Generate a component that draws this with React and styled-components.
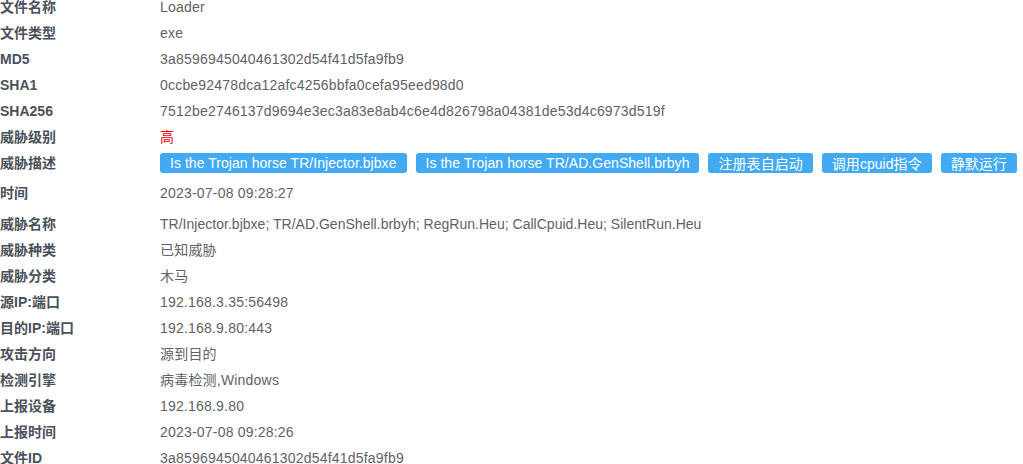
import React from 'react';
import styled, { createGlobalStyle } from 'styled-components';

const GlobalStyle = createGlobalStyle`
  html, body {
    margin: 0;
    padding: 0;
    background: #fff;
    overflow: hidden;
  }
  body {
    font-family: "Liberation Sans", Arial, "Noto Sans CJK SC", sans-serif;
  }
`;

const Wrapper = styled.div`
  margin-top: -6px;
  width: 1023px;
`;

const Section = styled.div`
  display: flex;
  flex-direction: column;
  margin-bottom: ${(p) => p.gap || 0}px;
`;

const Row = styled.div`
  display: flex;
  align-items: ${(p) => (p.tags ? 'flex-start' : 'center')};
  min-height: 26px;
  padding: ${(p) => (p.tags ? '3px 0 3px' : '0')};
  box-sizing: border-box;
`;

const Label = styled.div`
  width: 160px;
  flex-shrink: 0;
  font-size: 14px;
  font-weight: bold;
  color: #4a515b;
  line-height: 20px;
`;

const Value = styled.div`
  font-size: 14px;
  color: ${(p) => (p.danger ? '#ff0000' : '#606266')};
  line-height: 20px;
  letter-spacing: ${(p) => (p.tight ? '0.02px' : '0.2px')};
  white-space: nowrap;
`;

const TagList = styled.div`
  display: flex;
  flex-wrap: nowrap;
`;

const Tag = styled.span`
  display: inline-flex;
  align-items: center;
  height: 20px;
  padding: 0 10px;
  margin: 0 9px 4px 0;
  background: #41aaf3;
  color: #fff;
  font-size: 14px;
  letter-spacing: 0.05px;
  border-radius: 3px;
  white-space: nowrap;
`;

const top = [
  ['文件名称', 'Loader'],
  ['文件类型', 'exe'],
  ['MD5', '3a8596945040461302d54f41d5fa9fb9'],
  ['SHA1', '0ccbe92478dca12afc4256bbfa0cefa95eed98d0'],
  ['SHA256', '7512be2746137d9694e3ec3a83e8ab4c6e4d826798a04381de53d4c6973d519f'],
];

const tags = [
  'Is the Trojan horse TR/Injector.bjbxe',
  'Is the Trojan horse TR/AD.GenShell.brbyh',
  '注册表自启动',
  '调用cpuid指令',
  '静默运行',
];

const bottom = [
  ['威胁名称', 'TR/Injector.bjbxe; TR/AD.GenShell.brbyh; RegRun.Heu; CallCpuid.Heu; SilentRun.Heu', true],
  ['威胁种类', '已知威胁'],
  ['威胁分类', '木马'],
  ['源IP:端口', '192.168.3.35:56498'],
  ['目的IP:端口', '192.168.9.80:443'],
  ['攻击方向', '源到目的'],
  ['检测引擎', '病毒检测,Windows'],
  ['上报设备', '192.168.9.80'],
  ['上报时间', '2023-07-08 09:28:26'],
  ['文件ID', '3a8596945040461302d54f41d5fa9fb9'],
];

export default function App() {
  return (
    <>
      <GlobalStyle />
      <Wrapper>
        <Section gap={5}>
          {top.map(([k, v]) => (
            <Row key={k}>
              <Label>{k}</Label>
              <Value>{v}</Value>
            </Row>
          ))}
          <Row>
            <Label>威胁级别</Label>
            <Value danger>高</Value>
          </Row>
          <Row tags>
            <Label>威胁描述</Label>
            <TagList>
              {tags.map((t) => (
                <Tag key={t}>{t}</Tag>
              ))}
            </TagList>
          </Row>
          <Row>
            <Label>时间</Label>
            <Value>2023-07-08 09:28:27</Value>
          </Row>
        </Section>
        <Section>
          {bottom.map(([k, v, tight]) => (
            <Row key={k}>
              <Label>{k}</Label>
              <Value tight={tight}>{v}</Value>
            </Row>
          ))}
        </Section>
      </Wrapper>
    </>
  );
}
